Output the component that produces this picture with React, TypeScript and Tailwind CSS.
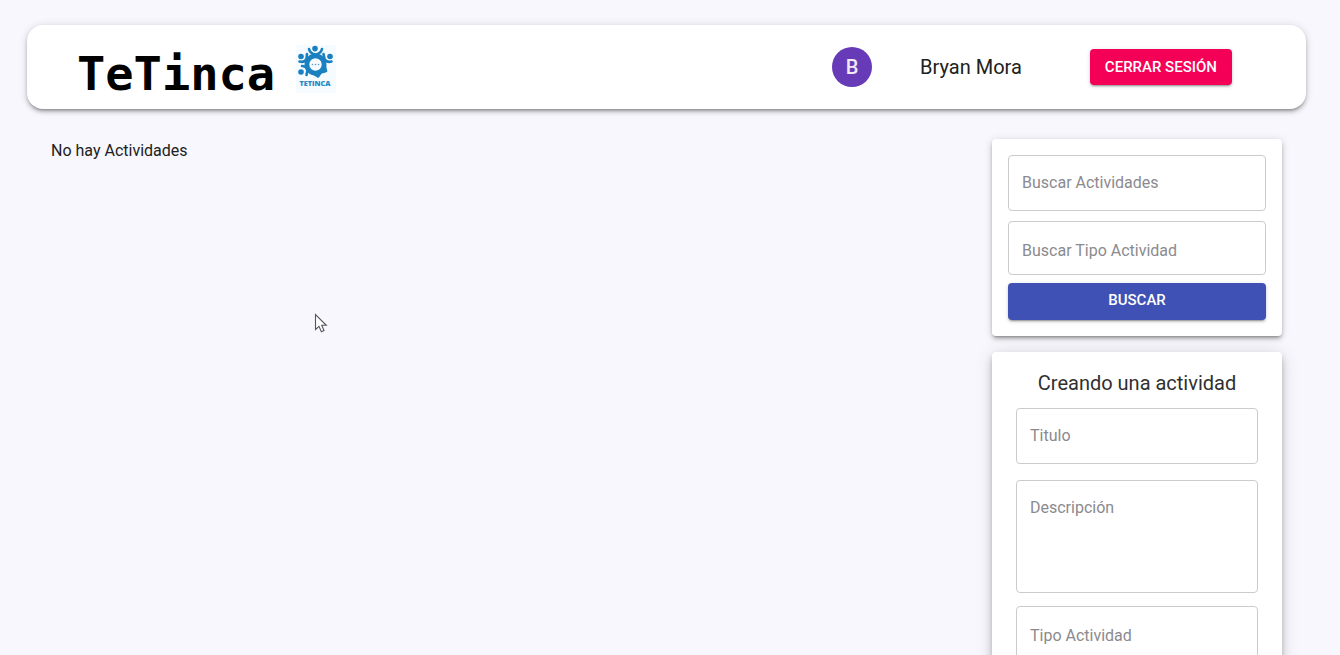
const elevation =
  "shadow-[0_3px_3px_-2px_rgba(0,0,0,0.3),0_3px_4px_0_rgba(0,0,0,0.18),0_1px_8px_0_rgba(0,0,0,0.14)]";
const raisedElevation =
  "shadow-[0_3px_5px_-1px_rgba(0,0,0,0.2),0_6px_10px_0_rgba(0,0,0,0.14),0_1px_18px_0_rgba(0,0,0,0.12)]";
const buttonShadow =
  "shadow-[0_3px_1px_-2px_rgba(0,0,0,0.2),0_2px_2px_0_rgba(0,0,0,0.14),0_1px_5px_0_rgba(0,0,0,0.12)]";
const fieldBase =
  "block w-full rounded border border-[#cbcbcd] bg-white px-[13px] text-base text-[#212121] placeholder:text-[#8b8a8e] outline-none focus:border-[#3f51b5]";

function Logo() {
  return (
    <svg viewBox="0 0 40 48" className="h-12 w-10" role="img" aria-label="Tetinca">
      <rect width="40" height="48" fill="#f5fbff" />
      <g fill="#1a80bf">
        <circle cx="19" cy="3.6" r="2.8" />
        <circle cx="5" cy="11.5" r="2.8" />
        <circle cx="34" cy="11.5" r="2.8" />
        <circle cx="5" cy="27" r="2.8" />
      </g>
      <g fill="none" stroke="#1a80bf" strokeLinecap="round" strokeLinejoin="round">
        <circle cx="19.5" cy="19.5" r="8.6" strokeWidth="4.8" />
        <path d="M13 4 Q14 8.5 19.5 9.5 Q25 8.5 26 4" strokeWidth="2.6" />
        <path d="M3.5 16.5 Q8 18 10.5 14 L11 9" strokeWidth="2.6" />
        <path d="M35.5 16.5 Q31 18 28.5 14 L27.5 9" strokeWidth="2.6" />
        <path d="M6 21 Q10 21 11.5 25 L10.5 30" strokeWidth="2.6" />
        <path d="M29 22 L30 26 L27 27 M18 29 L22 31.5 L25 27" strokeWidth="2.6" />
      </g>
      <g fill="#5c9fcb">
        <circle cx="16.5" cy="19.5" r="0.8" />
        <circle cx="19.5" cy="19.5" r="0.8" />
        <circle cx="22.5" cy="19.5" r="0.8" />
      </g>
      <text
        x="19"
        y="41"
        textAnchor="middle"
        className="font-['Open_Sans',sans-serif] font-extrabold"
        fontSize="7.2"
        fill="#2489c4"
      >
        TETINCA
      </text>
    </svg>
  );
}

function Pointer() {
  return (
    <svg
      viewBox="0 0 14 21"
      className="pointer-events-none absolute top-[313px] left-[314px] h-[21px] w-[14px]"
      aria-hidden="true"
    >
      <path
        d="M1.5 1.5 V16.5 L5 13.3 L7.4 18.7 L10 17.5 L7.7 12.3 H12.3 Z"
        fill="#fff"
        stroke="#55555c"
        strokeWidth="1.1"
      />
    </svg>
  );
}

function Header() {
  return (
    <header className={`flex h-[84px] items-center rounded-2xl bg-white pr-[74px] pl-[50px] ${elevation}`}>
      <a href="#inicio" className="flex items-center gap-[21px] pt-1 text-black">
        <span className="pt-2 font-['DejaVu_Sans_Mono',monospace] text-[47px] leading-none font-bold">TeTinca</span>
        <Logo />
      </a>
      <div className="ml-auto flex items-center">
        <span className="flex size-10 items-center justify-center rounded-full bg-[#673ab7] text-xl font-medium text-[#f1eaf8]">
          B
        </span>
        <span className="ml-12 text-xl text-[#212121]">Bryan Mora</span>
        <button
          type="button"
          className={`ml-[68px] h-9 rounded bg-[#f50057] px-[15px] text-[15px] font-medium whitespace-nowrap text-white ${buttonShadow}`}
        >
          CERRAR SESIÓN
        </button>
      </div>
    </header>
  );
}

function SearchCard() {
  return (
    <form className={`rounded bg-white p-4 ${elevation}`} onSubmit={(e) => e.preventDefault()}>
      <input
        type="text"
        aria-label="Buscar Actividades"
        placeholder="Buscar Actividades"
        className={`h-14 pb-[2px] ${fieldBase}`}
      />
      <input
        type="text"
        aria-label="Buscar Tipo Actividad"
        placeholder="Buscar Tipo Actividad"
        className={`mt-[10px] h-[54px] pt-1 ${fieldBase}`}
      />
      <button
        type="submit"
        className={`mt-2 block h-[37px] w-full rounded bg-[#3f51b5] pb-[2px] text-[15px] font-medium text-white ${buttonShadow}`}
      >
        BUSCAR
      </button>
    </form>
  );
}

function CreateCard() {
  return (
    <form className={`rounded bg-white px-6 pt-[15px] pb-6 ${raisedElevation}`} onSubmit={(e) => e.preventDefault()}>
      <h2 className="text-center text-xl leading-8 text-[#303030]">Creando una actividad</h2>
      <input type="text" aria-label="Titulo" placeholder="Titulo" className={`mt-[9px] h-14 pb-[2px] ${fieldBase}`} />
      <textarea
        aria-label="Descripción"
        placeholder="Descripción"
        className={`mt-4 h-[113px] resize-none py-[15px] ${fieldBase}`}
      />
      <input
        type="text"
        aria-label="Tipo Actividad"
        placeholder="Tipo Actividad"
        className={`mt-[13px] h-14 pt-[2px] ${fieldBase}`}
      />
    </form>
  );
}

export default function App() {
  return (
    <div className="relative h-screen overflow-y-auto bg-[#f7f7fd] pt-[25px] pr-[34px] pb-6 pl-[27px] font-[Roboto,sans-serif] text-[#212121] [scrollbar-width:none]">
      <Header />
      <main className="mt-[30px] flex items-start justify-between px-6">
        <p className="text-base">No hay Actividades</p>
        <aside className="flex w-[290px] flex-col gap-4">
          <SearchCard />
          <CreateCard />
        </aside>
      </main>
      <Pointer />
    </div>
  );
}
